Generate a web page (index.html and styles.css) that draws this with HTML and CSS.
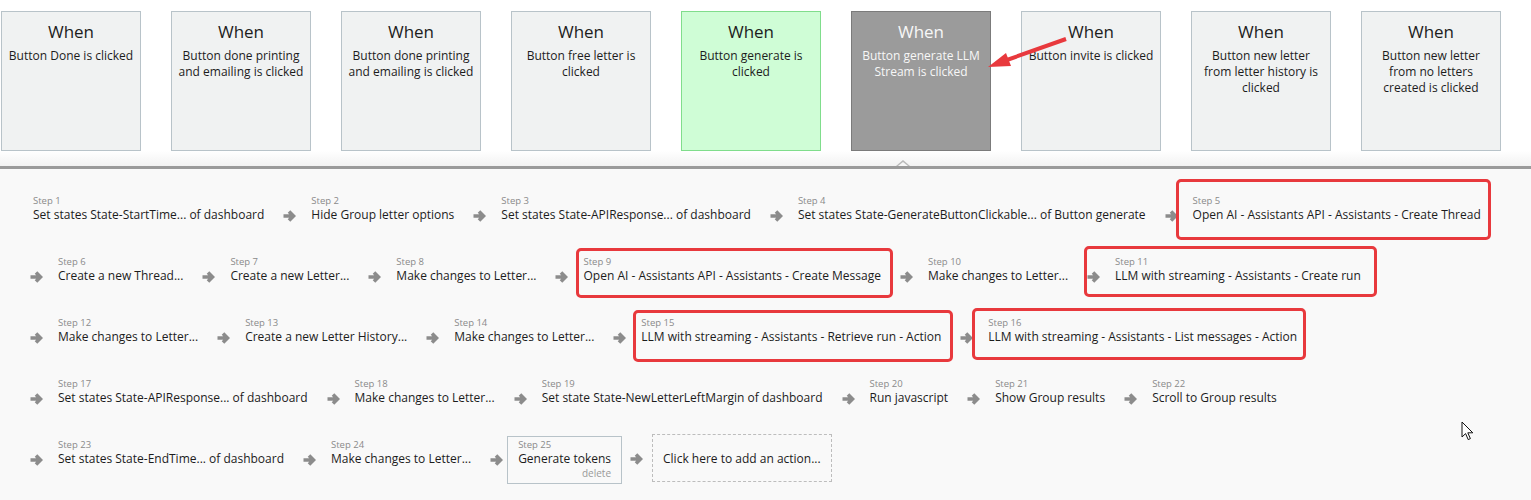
FILE: index.html
```html
<!DOCTYPE html>
<html lang="en">
<head>
    <meta charset="UTF-8">
    <meta name="viewport" content="width=device-width, initial-scale=1.0">
    <link rel="stylesheet" href="styles.css">
    <title>Workflow Editor</title>
</head>
<body>
    <div id="Editor">
        <div class="events">
            <div class="event"><div class="event-title">When</div><div class="event-desc">Button Done is clicked</div></div>
            <div class="event"><div class="event-title">When</div><div class="event-desc">Button done printing and emailing is clicked</div></div>
            <div class="event"><div class="event-title">When</div><div class="event-desc">Button done printing and emailing is clicked</div></div>
            <div class="event"><div class="event-title">When</div><div class="event-desc">Button free letter is clicked</div></div>
            <div class="event event-green"><div class="event-title">When</div><div class="event-desc">Button generate is clicked</div></div>
            <div class="event event-selected"><div class="event-title">When</div><div class="event-desc">Button generate LLM Stream is clicked</div></div>
            <div class="event"><div class="event-title">When</div><div class="event-desc">Button invite is clicked</div></div>
            <div class="event"><div class="event-title">When</div><div class="event-desc">Button new letter from letter history is clicked</div></div>
            <div class="event"><div class="event-title">When</div><div class="event-desc">Button new letter from no letters created is clicked</div></div>
        </div>

        <div class="divider"><span class="notch"></span></div>

        <div class="workflow">
            <div class="step">
                <div class="step-num">Step 1</div>
                <div class="step-name">Set states State-StartTime... of dashboard</div>
            </div>
            <div class="link">
                <svg class="arrow" viewBox="0 0 14 14"><path d="M1.5 7h9.5M7 2.5l4.5 4.5-4.5 4.5"/></svg>
                <div class="step"><div class="step-num">Step 2</div><div class="step-name">Hide Group letter options</div></div>
            </div>
            <div class="link">
                <svg class="arrow" viewBox="0 0 14 14"><path d="M1.5 7h9.5M7 2.5l4.5 4.5-4.5 4.5"/></svg>
                <div class="step"><div class="step-num">Step 3</div><div class="step-name">Set states State-APIResponse... of dashboard</div></div>
            </div>
            <div class="link">
                <svg class="arrow" viewBox="0 0 14 14"><path d="M1.5 7h9.5M7 2.5l4.5 4.5-4.5 4.5"/></svg>
                <div class="step"><div class="step-num">Step 4</div><div class="step-name">Set states State-GenerateButtonClickable... of Button generate</div></div>
            </div>
            <div class="link">
                <svg class="arrow" viewBox="0 0 14 14"><path d="M1.5 7h9.5M7 2.5l4.5 4.5-4.5 4.5"/></svg>
                <div class="step mark mark-5"><div class="step-num">Step 5</div><div class="step-name">Open AI - Assistants API - Assistants - Create Thread</div></div>
            </div>
            <div class="link">
                <svg class="arrow" viewBox="0 0 14 14"><path d="M1.5 7h9.5M7 2.5l4.5 4.5-4.5 4.5"/></svg>
                <div class="step"><div class="step-num">Step 6</div><div class="step-name">Create a new Thread...</div></div>
            </div>
            <div class="link">
                <svg class="arrow" viewBox="0 0 14 14"><path d="M1.5 7h9.5M7 2.5l4.5 4.5-4.5 4.5"/></svg>
                <div class="step"><div class="step-num">Step 7</div><div class="step-name">Create a new Letter...</div></div>
            </div>
            <div class="link">
                <svg class="arrow" viewBox="0 0 14 14"><path d="M1.5 7h9.5M7 2.5l4.5 4.5-4.5 4.5"/></svg>
                <div class="step"><div class="step-num">Step 8</div><div class="step-name">Make changes to Letter...</div></div>
            </div>
            <div class="link">
                <svg class="arrow" viewBox="0 0 14 14"><path d="M1.5 7h9.5M7 2.5l4.5 4.5-4.5 4.5"/></svg>
                <div class="step mark mark-9"><div class="step-num">Step 9</div><div class="step-name">Open AI - Assistants API - Assistants - Create Message</div></div>
            </div>
            <div class="link">
                <svg class="arrow" viewBox="0 0 14 14"><path d="M1.5 7h9.5M7 2.5l4.5 4.5-4.5 4.5"/></svg>
                <div class="step"><div class="step-num">Step 10</div><div class="step-name">Make changes to Letter...</div></div>
            </div>
            <div class="link">
                <svg class="arrow" viewBox="0 0 14 14"><path d="M1.5 7h9.5M7 2.5l4.5 4.5-4.5 4.5"/></svg>
                <div class="step mark mark-11"><div class="step-num">Step 11</div><div class="step-name">LLM with streaming - Assistants - Create run</div></div>
            </div>
            <div class="link">
                <svg class="arrow" viewBox="0 0 14 14"><path d="M1.5 7h9.5M7 2.5l4.5 4.5-4.5 4.5"/></svg>
                <div class="step"><div class="step-num">Step 12</div><div class="step-name">Make changes to Letter...</div></div>
            </div>
            <div class="link">
                <svg class="arrow" viewBox="0 0 14 14"><path d="M1.5 7h9.5M7 2.5l4.5 4.5-4.5 4.5"/></svg>
                <div class="step"><div class="step-num">Step 13</div><div class="step-name">Create a new Letter History...</div></div>
            </div>
            <div class="link">
                <svg class="arrow" viewBox="0 0 14 14"><path d="M1.5 7h9.5M7 2.5l4.5 4.5-4.5 4.5"/></svg>
                <div class="step"><div class="step-num">Step 14</div><div class="step-name">Make changes to Letter...</div></div>
            </div>
            <div class="link">
                <svg class="arrow" viewBox="0 0 14 14"><path d="M1.5 7h9.5M7 2.5l4.5 4.5-4.5 4.5"/></svg>
                <div class="step mark mark-15"><div class="step-num">Step 15</div><div class="step-name">LLM with streaming - Assistants - Retrieve run - Action</div></div>
            </div>
            <div class="link">
                <svg class="arrow" viewBox="0 0 14 14"><path d="M1.5 7h9.5M7 2.5l4.5 4.5-4.5 4.5"/></svg>
                <div class="step mark mark-16"><div class="step-num">Step 16</div><div class="step-name">LLM with streaming - Assistants - List messages - Action</div></div>
            </div>
            <div class="link">
                <svg class="arrow" viewBox="0 0 14 14"><path d="M1.5 7h9.5M7 2.5l4.5 4.5-4.5 4.5"/></svg>
                <div class="step"><div class="step-num">Step 17</div><div class="step-name">Set states State-APIResponse... of dashboard</div></div>
            </div>
            <div class="link">
                <svg class="arrow" viewBox="0 0 14 14"><path d="M1.5 7h9.5M7 2.5l4.5 4.5-4.5 4.5"/></svg>
                <div class="step"><div class="step-num">Step 18</div><div class="step-name">Make changes to Letter...</div></div>
            </div>
            <div class="link">
                <svg class="arrow" viewBox="0 0 14 14"><path d="M1.5 7h9.5M7 2.5l4.5 4.5-4.5 4.5"/></svg>
                <div class="step"><div class="step-num">Step 19</div><div class="step-name">Set state State-NewLetterLeftMargin of dashboard</div></div>
            </div>
            <div class="link">
                <svg class="arrow" viewBox="0 0 14 14"><path d="M1.5 7h9.5M7 2.5l4.5 4.5-4.5 4.5"/></svg>
                <div class="step"><div class="step-num">Step 20</div><div class="step-name">Run javascript</div></div>
            </div>
            <div class="link">
                <svg class="arrow" viewBox="0 0 14 14"><path d="M1.5 7h9.5M7 2.5l4.5 4.5-4.5 4.5"/></svg>
                <div class="step"><div class="step-num">Step 21</div><div class="step-name">Show Group results</div></div>
            </div>
            <div class="link">
                <svg class="arrow" viewBox="0 0 14 14"><path d="M1.5 7h9.5M7 2.5l4.5 4.5-4.5 4.5"/></svg>
                <div class="step"><div class="step-num">Step 22</div><div class="step-name">Scroll to Group results</div></div>
            </div>
            <div class="link">
                <svg class="arrow" viewBox="0 0 14 14"><path d="M1.5 7h9.5M7 2.5l4.5 4.5-4.5 4.5"/></svg>
                <div class="step"><div class="step-num">Step 23</div><div class="step-name">Set states State-EndTime... of dashboard</div></div>
            </div>
            <div class="link">
                <svg class="arrow" viewBox="0 0 14 14"><path d="M1.5 7h9.5M7 2.5l4.5 4.5-4.5 4.5"/></svg>
                <div class="step"><div class="step-num">Step 24</div><div class="step-name">Make changes to Letter...</div></div>
            </div>
            <div class="link">
                <svg class="arrow" viewBox="0 0 14 14"><path d="M1.5 7h9.5M7 2.5l4.5 4.5-4.5 4.5"/></svg>
                <div class="step step-open">
                    <div class="step-num">Step 25</div>
                    <div class="step-name">Generate tokens</div>
                    <div class="step-delete">delete</div>
                </div>
            </div>
            <div class="link">
                <svg class="arrow" viewBox="0 0 14 14"><path d="M1.5 7h9.5M7 2.5l4.5 4.5-4.5 4.5"/></svg>
                <div class="add-action">Click here to add an action...</div>
            </div>
        </div>

        <!-- annotation arrow drawn on the screenshot -->
        <svg class="annot-arrow" viewBox="0 0 1531 500">
            <line x1="1066" y1="39" x2="1004" y2="61"/>
            <polygon points="988,67 1006,53 1011,66"/>
        </svg>

        <svg class="cursor" viewBox="0 0 13 20">
            <path d="M1 1v15l3.6-3.4 2.6 6 2.2-1-2.6-5.8h5z"/>
        </svg>
    </div>
</body>
</html>
```

FILE: styles.css
```css
body {
    margin: 0;
    padding: 0;
    background-color: #fff;
    font-family: "Open Sans", Arial, sans-serif;
    color: #1c1c1c;
    overflow: hidden;
}

#Editor {
    position: relative;
    width: 1531px;
    height: 500px;
    overflow: hidden;
}

/* event cards */
.events {
    display: flex;
    gap: 30px;
    padding: 11px 0 0 1px;
}

.event {
    flex: 0 0 140px;
    height: 140px;
    box-sizing: border-box;
    background-color: #f0f2f2;
    border: 1px solid #b8c3c9;
    padding: 9px 6px 0;
    text-align: center;
}

.event-title {
    font-size: 17px;
    line-height: 22px;
    margin-bottom: 5px;
}

.event-desc {
    font-size: 12px;
    line-height: 16px;
}

.event-green {
    background-color: #cffdd6;
    border-color: #80dd8c;
}

.event-selected {
    background-color: #9b9b9b;
    border-color: #7b7b7b;
    color: #f7f7f7;
}

.divider {
    position: relative;
    height: 15px;
    background: linear-gradient(#fff, #f2f2f2);
    border-bottom: 3px solid #9a9a9a;
}

.notch {
    position: absolute;
    left: 896px;
    bottom: 0;
    width: 0;
    height: 0;
    border-left: 7px solid transparent;
    border-right: 7px solid transparent;
    border-bottom: 6px solid #b9b9b9;
}

.notch::after {
    content: "";
    position: absolute;
    left: -5px;
    top: 2px;
    border-left: 5px solid transparent;
    border-right: 5px solid transparent;
    border-bottom: 4px solid #f6f6f6;
}

/* workflow steps */
.workflow {
    display: flex;
    flex-wrap: wrap;
    align-items: flex-start;
    align-content: flex-start;
    row-gap: 13px;
    height: 500px;
    box-sizing: border-box;
    padding: 23px 20px 0 22px;
    background-color: #f9f9f9;
}

.link {
    display: flex;
    align-items: center;
}

.arrow {
    width: 14px;
    height: 14px;
    margin: 0 4px 0 7px;
}

.arrow path {
    fill: none;
    stroke: #8c8c8c;
    stroke-width: 3.6;
}

.step {
    position: relative;
    height: 48px;
    box-sizing: border-box;
    padding: 2px 10px;
    border: 1px solid transparent;
}

.step-num {
    font-size: 9.5px;
    line-height: 11px;
    color: #8a8a8a;
}

.step-name {
    font-size: 12px;
    line-height: 17px;
    white-space: nowrap;
}

.step-open {
    border-color: #b8c3c9;
}

.step-delete {
    font-size: 10px;
    line-height: 12px;
    color: #999;
    text-align: right;
}

.add-action {
    height: 48px;
    box-sizing: border-box;
    margin: -2px 0 0 5px;
    padding: 0 10px;
    display: flex;
    align-items: center;
    font-size: 12px;
    border: 1px dashed #bdbdbd;
}

/* red highlight boxes */
.mark::after {
    content: "";
    position: absolute;
    border: 3px solid #e8393d;
    border-radius: 5px;
}

.mark-5::after { left: -7px; right: 0; top: -14px; bottom: -1px; }
.mark-9::after { left: 3px; right: -2px; top: -6px; bottom: 2px; }
.mark-11::after { left: -21px; right: -6px; top: -8px; bottom: 3px; }
.mark-15::after { left: 2px; right: -2px; top: -5px; bottom: -1px; }
.mark-16::after { left: -6px; right: 1px; top: -7px; bottom: 1px; }

.annot-arrow {
    position: absolute;
    left: 0;
    top: 0;
    width: 1531px;
    height: 500px;
    pointer-events: none;
}

.annot-arrow line {
    stroke: #e8393d;
    stroke-width: 4;
}

.annot-arrow polygon {
    fill: #e8393d;
}

.cursor {
    position: absolute;
    left: 1461px;
    top: 421px;
    width: 13px;
    height: 20px;
}

.cursor path {
    fill: #fff;
    stroke: #111;
    stroke-width: 1;
}
```
